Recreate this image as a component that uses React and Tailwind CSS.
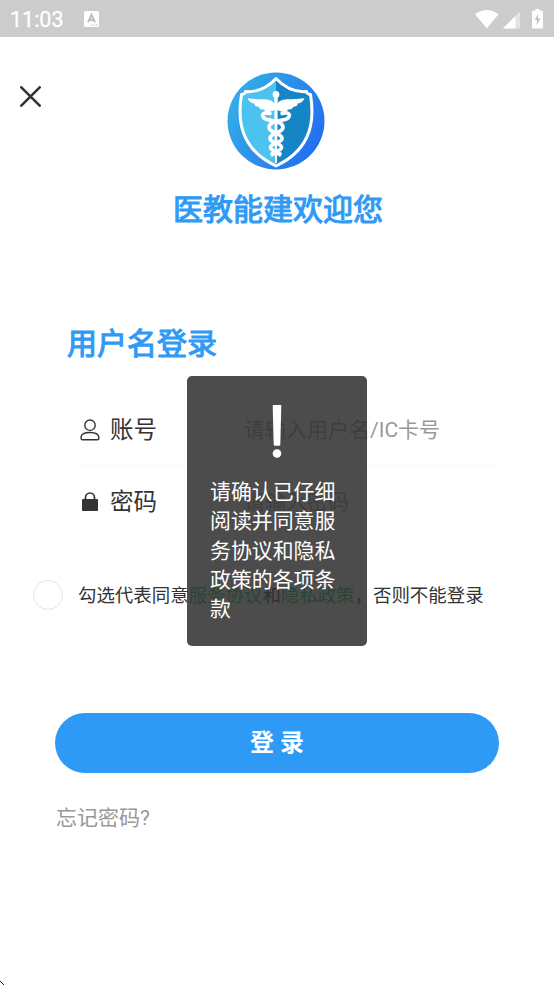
import React from "react";

function StatusBar() {
  return (
    <div className="flex h-[37px] shrink-0 items-center bg-[#cccccc] pl-[10px] text-white">
      <span className="w-[74px] pt-[2px] text-[21.5px] leading-[26px] [-webkit-text-stroke:0.3px_#fff]">11:03</span>
      <svg className="h-[16px] w-[15px]" viewBox="0 0 15 16">
        <rect width="15" height="16" rx="1.5" fill="#fff" />
        <path d="M4 11.3 7.5 3.8 11 11.3M5.3 9H9.7" fill="none" stroke="#bdbdbd" strokeWidth="2" />
        <path d="M7.5 14H13.5" stroke="#bbb" strokeWidth="1" strokeDasharray="1.3 .9" />
      </svg>
      <svg className="ml-auto mr-[10px] h-[22px] w-[70px]" viewBox="474 7 70 22">
        <path d="M475 13.3Q486.8 4.8 498.6 13.3L486.8 27.3Z" fill="#fff" />
        <path d="M520 10.5V27.5H503Z" fill="#e4e4e4" />
        <path d="M515.5 15V27.5H503Z" fill="#fff" />
        <path d="M535.5 8h4v1.8h2.3q1.2 0 1.2 1.2v15.3q0 1.2-1.2 1.2h-8.6q-1.2 0-1.2-1.2V11q0-1.2 1.2-1.2h2.3z" fill="#fff" />
        <path d="M538.3 12.5 534.8 19h2.3l-.6 5.500 3.800-7h-2.500z" fill="#bdbdbd" />
      </svg>
    </div>
  );
}

function Logo() {
  return (
    <svg className="h-[98px] w-[98px]" viewBox="0 0 98 98">
      <defs>
        <linearGradient id="disc" x1="0" y1=".25" x2="1" y2=".75">
          <stop offset="0" stopColor="#35b0e6" />
          <stop offset="1" stopColor="#216cf0" />
        </linearGradient>
      </defs>
      <circle cx="49" cy="49" r="48.5" fill="url(#disc)" />
      <path d="M49 6.5C41 15 30 20.5 18.5 19.5C19 21 16 22.5 14.5 22.5C11 44 10.5 76 49 94C87.5 76 87 44 83.5 22.5C82 22.5 79 21 79.5 19.5C68 20.5 57 15 49 6.5Z" fill="#4cc3ef" />
      <path d="M49 6.5C57 15 68 20.5 79.5 19.5C79 21 82 22.5 83.5 22.5C87 44 87.5 76 49 94Z" fill="#1685c5" />
      <path d="M49 6.5C41 15 30 20.5 18.5 19.5C19 21 16 22.5 14.5 22.5C11 44 10.5 76 49 94C87.5 76 87 44 83.5 22.5C82 22.5 79 21 79.5 19.5C68 20.5 57 15 49 6.5Z" fill="none" stroke="#fff" strokeWidth="3" strokeLinejoin="round" />
      <g fill="#fff">
        <circle cx="49" cy="22.5" r="3.4" />
        <path d="M47.2 24h3.600l-.8 67h-2z" />
        <path d="M48 32C43 25 36 28.500 20.500 26.300C22 30 25 31.500 28 31.700C26.500 32.500 28 34.500 32 34.800C31.500 36.500 34 37.800 37 37.600C38 40.500 44 41 48 37.500Z" />
        <path d="M50 32C55 25 62 28.500 77.500 26.300C76 30 73 31.500 70 31.700C71.500 32.500 70 34.500 66 34.800C66.500 36.500 64 37.800 61 37.600C60 40.500 54 41 50 37.500Z" />
      </g>
      <g fill="none" stroke="#fff" strokeWidth="3.7" strokeLinecap="round">
        <path d="M43 41.500C34 38.500 33.500 46 40 47.500C48 49 56 50 56 55.500C56 61 43 60.500 43 66.500C43 71 54.500 70.500 54.500 75.500C54.500 79 47 79.500 45 82" />
        <path d="M55 41.500C64 38.500 64.500 46 58 47.500C50 49 42 50 42 55.500C42 61 55 60.500 55 66.500C55 71 43.500 70.500 43.500 75.500C43.500 79 51 79.500 53 82" />
      </g>
      <path d="M44.500 84.500 49 81.500 53.500 84.500" fill="none" stroke="#fff" strokeWidth="1.500" />
    </svg>
  );
}

function UserIcon() {
  return (
    <svg className="h-[22px] w-[20px]" viewBox="0 0 20 22" fill="none" stroke="#333" strokeWidth="1.350">
      <circle cx="10" cy="6.200" r="5.200" />
      <path d="M2.800 20.700Q1 20.700 1 19.200C1 14.800 4.500 13.500 10 13.500S19 14.800 19 19.200Q19 20.700 17.200 20.700Z" />
    </svg>
  );
}

function LockIcon() {
  return (
    <svg className="h-[20px] w-[20px]" viewBox="0 0 20 20">
      <path d="M5.500 8V5.500A4.500 4.500 0 0 1 14.500 5.500V8" fill="none" stroke="#333" strokeWidth="1.700" />
      <rect x="2" y="7" width="16" height="12" rx="1" fill="#333" />
    </svg>
  );
}

function Field({ icon, label, placeholder }) {
  return (
    <div className="flex h-[72px] items-center">
      <span className="flex w-[32px] pl-[2px]">{icon}</span>
      <span className="w-[134px] text-[23.5px] leading-[34px] text-[#333]">{label}</span>
      <span className="whitespace-nowrap text-[21px] leading-[30px] text-[#999]">{placeholder}</span>
    </div>
  );
}

function Toast() {
  return (
    <div className="absolute left-[187px] top-[376px] flex h-[270px] w-[180px] flex-col items-center rounded-[5px] bg-[#2f2f2f]/86 pt-[29px] text-white">
      <svg className="h-[54px] w-[12px]" viewBox="0 0 12 54" fill="#fff">
        <path d="M2.300 0H9.700Q10.300 0 10.300 1L9.300 39.500Q9.200 40.800 8 40.800H4Q2.800 40.800 2.700 39.500L1.700 1Q1.700 0 2.300 0Z" />
        <circle cx="6" cy="48.500" r="4.300" />
      </svg>
      <p className="mt-[19px] w-[134px] text-[20.9px] leading-[29.3px]">请确认已仔细阅读并同意服务协议和隐私政策的各项条款</p>
    </div>
  );
}

export default function App() {
  return (
    <div className="relative flex h-[985px] w-[554px] flex-col overflow-hidden bg-white font-['Roboto','Noto_Sans_CJK_SC',sans-serif]">
      <StatusBar />
      <header className="flex h-[135px] items-start pt-[35px]">
        <svg className="ml-[20px] mt-[14px] h-[21px] w-[21px]" viewBox="0 0 21 21" stroke="#333" strokeWidth="2.6" strokeLinecap="round" fill="none">
          <path d="M1.300 1.300 19.700 19.700M19.700 1.300 1.300 19.700" />
        </svg>
        <div className="ml-[186px]"><Logo /></div>
      </header>
      <h1 className="mt-[16px] pl-[2px] text-center text-[30px] leading-[44px] text-[#2f9af6] [-webkit-text-stroke:1.1px_#2f9af6]">医教能建欢迎您</h1>
      <h2 className="ml-[67px] mt-[90px] text-[30px] leading-[44px] text-[#2f9af6] [-webkit-text-stroke:1.1px_#2f9af6]">用户名登录</h2>
      <div className="ml-[78px] mt-[27px] w-[421px]">
        <div className="border-b border-[#f7f7f7] pt-px [&>div]:h-[71px]">
          <Field icon={<UserIcon />} label="账号" placeholder="请输入用户名/IC卡号" />
        </div>
        <Field icon={<LockIcon />} label="密码" placeholder="请输入密码" />
      </div>
      <div className="ml-[33px] mt-[41px] flex h-[32px] items-center">
        <span className="h-[30px] w-[30px] rounded-full border border-[#e4e4e4]" />
        <p className="ml-[15px] whitespace-nowrap pt-px text-[18.45px] leading-[28px] text-[#333]">
          勾选代表同意<span className="text-[#07c160]">服务协议</span>和<span className="text-[#07c160]">隐私政策</span>，否则不能登录
        </p>
      </div>
      <button className="ml-[55px] mt-[102px] h-[60px] w-[444px] shrink-0 rounded-full bg-[#2f9af6] text-[24px] font-bold text-white">登 录</button>
      <a className="ml-[56px] mt-[30px] text-[21px] leading-[30px] text-[#999]">忘记密码?</a>
      <svg className="absolute bottom-0 left-0 h-[5px] w-[5px]" viewBox="0 0 5 5"><path d="M0 1h1v1H0zM1 2h1v1H1zM2 3h1v1H2zM3 4h1v1H3z" fill="#111" /></svg>
      <Toast />
    </div>
  );
}
